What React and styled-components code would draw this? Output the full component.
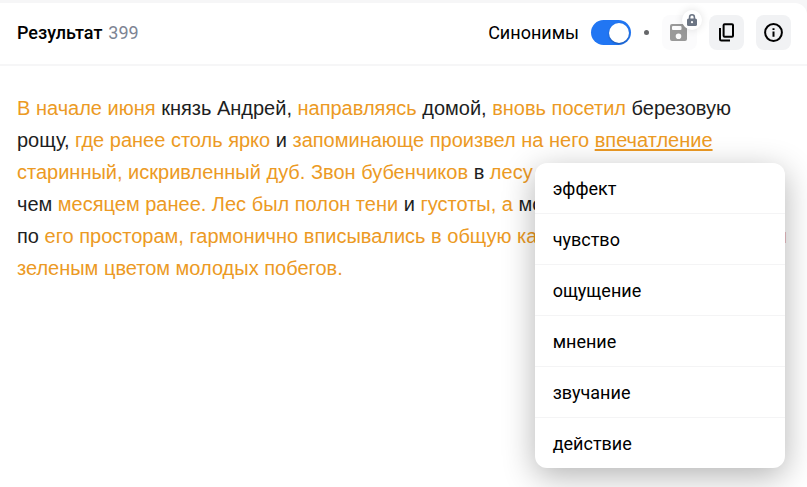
import React, { useState } from "react";
import styled, { createGlobalStyle } from "styled-components";

const GlobalStyle = createGlobalStyle`
  * {
    box-sizing: border-box;
  }
  body {
    margin: 0;
    background: #f6f6f7;
    font-family: Roboto, "Liberation Sans", sans-serif;
    overflow: hidden;
  }
`;

const Page = styled.div`
  display: flex;
  flex-direction: column;
  min-height: 100vh;
  padding-top: 3px;
`;

const Panel = styled.section`
  flex: 1;
  background: #fff;
  border-top-right-radius: 12px;
`;

const Header = styled.header`
  display: flex;
  justify-content: space-between;
  align-items: center;
  height: 63px;
  padding: 0 16px 2px 17px;
  border-bottom: 2px solid #f6f6f7;
`;

const Title = styled.h1`
  display: flex;
  gap: 6px;
  margin: 0;
  color: #000;
  font-size: 18px;
  line-height: 24px;
  font-weight: 500;
`;

const Count = styled.span`
  color: #7d8493;
  font-weight: 400;
`;

const Actions = styled.div`
  display: flex;
  align-items: center;
  gap: 12px;
`;

const SwitchLabel = styled.label`
  display: flex;
  align-items: center;
  gap: 12px;
  color: #000;
  font-size: 18px;
  line-height: 24px;
  cursor: pointer;
`;

const Switch = styled.input`
  appearance: none;
  display: flex;
  align-items: center;
  width: 40px;
  height: 25px;
  margin: 0;
  padding: 0 2px;
  border-radius: 13px;
  background: ${(props) => (props.checked ? "#2176f3" : "#c4c8cf")};
  cursor: pointer;
  &::before {
    content: "";
    width: 20px;
    height: 20px;
    margin-left: ${(props) => (props.checked ? "auto" : "0")};
    border-radius: 50%;
    background: #fff;
    box-shadow: 0 1px 2px rgba(0, 0, 0, 0.3);
  }
`;

const Dot = styled.span`
  width: 5px;
  height: 5px;
  margin: 0 1px;
  border-radius: 50%;
  background: #66676a;
`;

const IconButton = styled.button`
  position: relative;
  display: flex;
  justify-content: center;
  align-items: center;
  width: 35px;
  height: 35px;
  padding: 0;
  border: none;
  border-radius: 8px;
  background: ${(props) => (props.disabled ? "#fbfbfc" : "#f1f2f4")};
  color: ${(props) => (props.disabled ? "#999" : "#000")};
  cursor: pointer;
`;

const LockBadge = styled.span`
  position: absolute;
  top: -5px;
  right: -5px;
  display: flex;
  justify-content: center;
  align-items: center;
  width: 20px;
  height: 20px;
  border-radius: 50%;
  background: #fff;
  color: #6c7584;
  box-shadow: 0 0 8px rgba(0, 0, 0, 0.12);
`;

const Text = styled.div`
  padding: 26px 19px 26px 17px;
  color: #1d1e22;
  font-family: "Liberation Sans", Arial, sans-serif;
  font-size: 20px;
  line-height: 32px;
`;

const Changed = styled.span`
  color: #ec9a24;
`;

const WordAnchor = styled.span`
  position: relative;
  display: inline-block;
`;

const Word = styled.button`
  padding: 0;
  border: none;
  background: none;
  color: #ec9a24;
  font: inherit;
  text-decoration: underline;
  text-decoration-thickness: 2px;
  text-underline-offset: 2px;
  cursor: pointer;
`;

const Menu = styled.ul`
  position: absolute;
  top: 100%;
  left: -60px;
  z-index: 1;
  width: 250px;
  margin: 7px 0 0;
  padding: 0;
  border-radius: 12px;
  background: #fff;
  box-shadow: 0 8px 32px rgba(0, 0, 0, 0.3);
  list-style: none;
  overflow: hidden;
`;

const MenuItem = styled.li`
  & + & {
    border-top: 1px solid #f4f4f5;
  }
`;

const MenuButton = styled.button`
  display: block;
  width: 100%;
  height: 50px;
  padding: 2px 18px 0;
  border: none;
  background: none;
  color: #000;
  font-family: Roboto, "Liberation Sans", sans-serif;
  font-size: 18px;
  line-height: 24px;
  text-align: left;
  cursor: pointer;
  &:hover {
    background: #f6f6f7;
  }
`;

const SaveIcon = () => (
  <svg width="19" height="17" viewBox="0 0 19 17" fill="currentColor" aria-hidden="true">
    <path
      fillRule="evenodd"
      d="M2 0h11.5L17 3.5V15a2 2 0 0 1-2 2H2a2 2 0 0 1-2-2V2a2 2 0 0 1 2-2zm1 2a1 1 0 0 0-1 1v2a1 1 0 0 0 1 1h7.5a1 1 0 0 0 1-1V3a1 1 0 0 0-1-1zm5.5 7.4a2.8 2.8 0 1 0 0 5.6 2.8 2.8 0 0 0 0-5.6z"
    />
  </svg>
);

const LockIcon = () => (
  <svg width="10" height="12" viewBox="0 0 10 12" aria-hidden="true">
    <path d="M2.6 5V3.2a2.4 2.4 0 0 1 4.8 0V5" fill="none" stroke="currentColor" strokeWidth="1.6" />
    <rect y="4.5" width="10" height="7.5" rx="1.6" fill="currentColor" />
    <circle cx="5" cy="8.2" r="1.1" fill="#fff" />
  </svg>
);

const CopyIcon = () => (
  <svg width="15" height="19" viewBox="0 0 15 19" fill="none" stroke="currentColor" strokeWidth="2" aria-hidden="true">
    <rect x="4.6" y="1.2" width="9.4" height="12.6" rx="1" />
    <path d="M1 5v11.2a1.4 1.4 0 0 0 1.4 1.4H11" />
  </svg>
);

const InfoIcon = () => (
  <svg width="19" height="19" viewBox="0 0 19 19" fill="none" stroke="currentColor" strokeWidth="2" aria-hidden="true">
    <circle cx="9.5" cy="9.5" r="8.4" />
    <path d="M9.5 8.5V13.7M9.5 5.2V7" />
  </svg>
);

const synonyms = ["эффект", "чувство", "ощущение", "мнение", "звучание", "действие"];

const App = () => {
  const [enabled, setEnabled] = useState(true);
  const [open, setOpen] = useState(true);
  const [word, setWord] = useState("впечатление");

  const pick = (value) => {
    setWord(value);
    setOpen(false);
  };

  return (
    <>
      <GlobalStyle />
      <Page>
        <Panel>
          <Header>
            <Title>
              Результат <Count>399</Count>
            </Title>
            <Actions>
              <SwitchLabel>
                Синонимы
                <Switch
                  type="checkbox"
                  role="switch"
                  checked={enabled}
                  onChange={(e) => setEnabled(e.target.checked)}
                />
              </SwitchLabel>
              <Dot />
              <IconButton disabled aria-label="Сохранить">
                <SaveIcon />
                <LockBadge>
                  <LockIcon />
                </LockBadge>
              </IconButton>
              <IconButton aria-label="Копировать">
                <CopyIcon />
              </IconButton>
              <IconButton aria-label="Информация">
                <InfoIcon />
              </IconButton>
            </Actions>
          </Header>
          <Text>
            <Changed>В начале июня</Changed> князь Андрей, <Changed>направляясь</Changed> домой,{" "}
            <Changed>вновь посетил</Changed> березовую рощу, <Changed>где ранее столь ярко</Changed> и{" "}
            <Changed>запоминающе произвел на него</Changed>{" "}
            <WordAnchor>
              <Word aria-expanded={open} onClick={() => setOpen(!open)}>
                {word}
              </Word>
              {open && (
                <Menu>
                  {synonyms.map((item) => (
                    <MenuItem key={item}>
                      <MenuButton onClick={() => pick(item)}>{item}</MenuButton>
                    </MenuItem>
                  ))}
                </Menu>
              )}
            </WordAnchor>{" "}
            <Changed>старинный, искривленный дуб. Звон бубенчиков</Changed> в <Changed>лесу</Changed> раздавался
            чуть глуше, чем <Changed>месяцем ранее. Лес был полон тени</Changed> и <Changed>густоты, а</Changed>{" "}
            молодые ели, рассыпанные по{" "}
            <Changed>
              его просторам, гармонично вписывались в общую картину своим прекрасным и зеленым цветом молодых
              побегов.
            </Changed>
          </Text>
        </Panel>
      </Page>
    </>
  );
};

export default App;
